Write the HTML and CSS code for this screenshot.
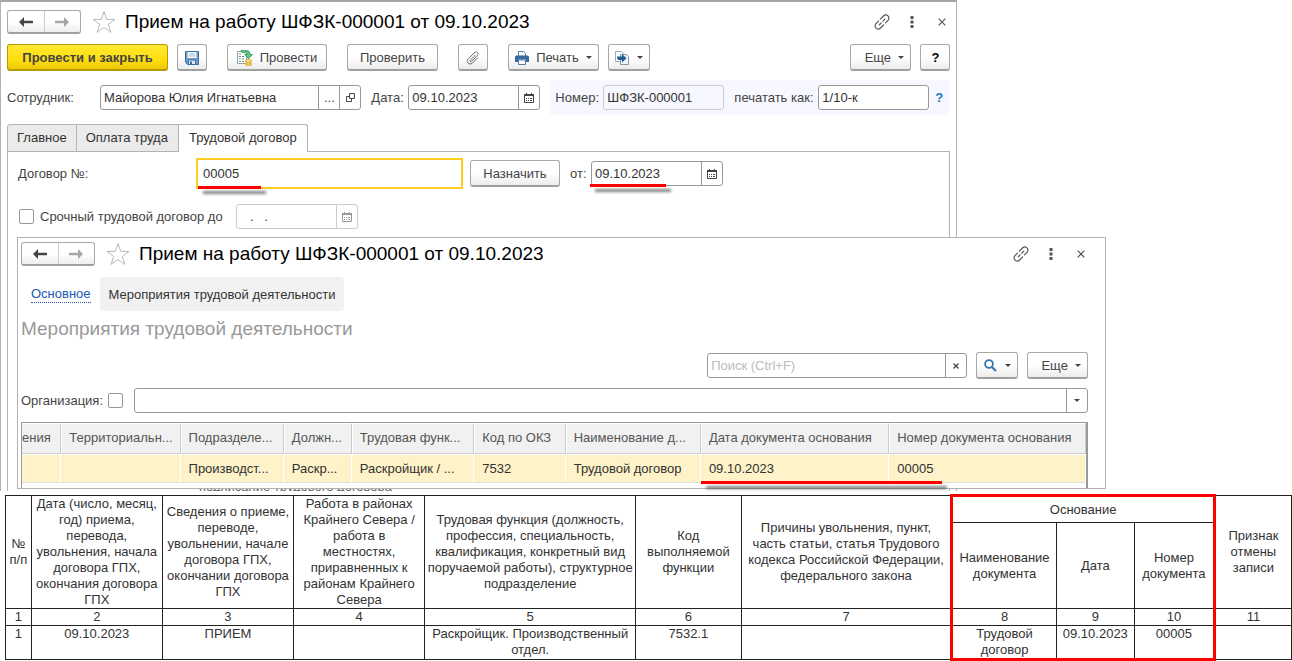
FILE: index.html
```html
<!DOCTYPE html>
<html lang="ru">
<head>
<meta charset="utf-8">
<title>Прием на работу</title>
<link rel="stylesheet" href="styles.css">
</head>
<body>
<svg class="defs" aria-hidden="true">
  <symbol id="i-left" viewBox="0 0 14 10"><path d="M5 0L0 5l5 5V6.300h9V3.700H5z" fill="currentColor"/></symbol>
  <symbol id="i-right" viewBox="0 0 14 10"><path d="M9 0l5 5-5 5V6.300H0V3.700h9z" fill="currentColor"/></symbol>
  <symbol id="i-star" viewBox="0 0 24 24"><path d="M12 1.500l2.700 7.900h8.300l-6.600 5 2.500 7.900-6.900-4.800-6.900 4.800 2.500-7.900-6.600-5h8.300z" fill="#fff" stroke="#b4b9bf"/></symbol>
  <symbol id="i-link" viewBox="0 0 16 16"><g fill="none" stroke="#555" stroke-width="1.200" stroke-linecap="round"><path d="M6.300 5.200l3.200-3.200c2.900-2.900 7.400 1.300 4.500 4.300l-2.500 2.500"/><path d="M9.700 10.800l-3.200 3.200c-2.900 2.900-7.400-1.300-4.500-4.300l2.500-2.500"/><path d="M5.200 10.800l2-2M8.800 7.200l2-2"/></g></symbol>
  <symbol id="i-dots" viewBox="0 0 4 12"><path d="M.5 0h3v3h-3zM.5 4.500h3v3h-3zM.5 9h3v3h-3z" fill="#555"/></symbol>
  <symbol id="i-close" viewBox="0 0 8 8"><path d="M.7.7l6.600 6.600M7.300.7L.7 7.300" stroke="#555" stroke-width="1.200"/></symbol>
  <symbol id="i-x" viewBox="0 0 6 6"><path d="M.5.5l5 5M5.500.5l-5 5" stroke="#444" stroke-width="1.200"/></symbol>
  <symbol id="i-caret" viewBox="0 0 6 3"><path d="M0 0h6L3 3z" fill="#444"/></symbol>
  <symbol id="i-save" viewBox="0 0 14 14"><path d="M.5.5h13v13h-11l-2-2z" fill="#6d9cc9" stroke="#3e6ea0"/><path d="M2.500 1h9v6h-9z" fill="#fff"/><path d="M3.500 3h7M3.500 5h7" stroke="#9fb6cc"/><path d="M3.500 9h7v4.500h-7z" fill="#dbe8f3" stroke="#3e6ea0"/><path d="M5 10.500h2v2.500H5z" fill="#3e6ea0"/></symbol>
  <symbol id="i-post" viewBox="0 0 16 16"><path d="M.5 1.500h9v12h-9z" fill="#fff" stroke="#8fa3ad"/><path d="M2 4h2M2 6.500h2M2 9h2M2 11.500h2M5 6.500h2M5 9h2M5 11.500h2" stroke="#6d8c9a"/><path d="M4 .6h5c3 0 4 1.400 4 3.900h2.400L11.500 8.800 7.700 4.500H10C10 3 9.500 2.600 8 2.600H5z" fill="#62c483" stroke="#2e9657" stroke-width=".8"/><ellipse cx="11.500" cy="14" rx="3.300" ry="1.500" fill="#f6cf5c" stroke="#d79e24" stroke-width=".8"/><ellipse cx="11.500" cy="11" rx="3.300" ry="1.500" fill="#fbdf84" stroke="#d79e24" stroke-width=".8"/></symbol>
  <symbol id="i-clip" viewBox="0 0 14 14"><path d="M9.500 4L4.300 9.200c-.9.900.3 2.100 1.200 1.200l5.900-5.900c2-2-1-4.800-3-2.800L2.300 7.800c-3 3 1.300 7.100 4.200 4.200L12 6.500" fill="none" stroke="#666"/></symbol>
  <symbol id="i-print" viewBox="0 0 14 14"><path d="M3.500 5V.5h5l2 2V5" fill="#fff" stroke="#54799f"/><path d="M1.500 4.500h11Q14 4.500 14 6v5h-3V8.500H3V11H0V6q0-1.500 1.500-1.500z" fill="#35699f"/><path d="M3.500 9h7v4.500h-7z" fill="#fff" stroke="#54799f"/></symbol>
  <symbol id="i-base" viewBox="0 0 14 14"><path d="M.5.5h6l2 2v8h-8z" fill="#fff" stroke="#9aa9b8"/><path d="M5.500 3.500h6l2 2v8h-8z" fill="#edf3f8" stroke="#8399ad"/><path d="M2 5.500h5V3l4.500 4.200L7 11.500V9H4Q2 9 2 5.500z" fill="#275b91"/></symbol>
  <symbol id="i-cal" viewBox="0 0 10 10"><path d="M.5 1.500h9v8h-9z" fill="#fff" stroke="currentColor"/><path d="M0 1h10v2H0zM2 0h1v2H2zM7 0h1v2H7z" fill="currentColor"/><path d="M2 5h1v1H2zM4 5h1v1H4zM6 5h2v1H6zM2 7h1v1H2zM4 7h1v1H4zM6 7h2v1H6z" fill="currentColor"/></symbol>
  <symbol id="i-open" viewBox="0 0 9 9"><path d="M3.500.5h5v5h-5z" fill="none" stroke="#444"/><path d="M3 3.500H.5v5h5V6" fill="none" stroke="#444"/></symbol>
  <symbol id="i-find" viewBox="0 0 13 13"><circle cx="5" cy="5" r="3.900" fill="#fff" stroke="#3476b0" stroke-width="1.800"/><path d="M8 8l4 4" stroke="#3476b0" stroke-width="2.200"/></symbol>
</svg>

<main class="page">
  <div class="stage">
    <section class="window window-back">
      <header class="titlebar">
        <div class="nav"><button type="button" aria-label="Назад"><svg class="arrow"><use href="#i-left"/></svg></button><button type="button" class="off" aria-label="Вперед"><svg class="arrow"><use href="#i-right"/></svg></button></div>
        <svg class="star"><use href="#i-star"/></svg>
        <h1 class="title">Прием на работу ШФЗК-000001 от 09.10.2023</h1>
        <div class="tools"><button type="button" class="tool" aria-label="Ссылка"><svg class="s16"><use href="#i-link"/></svg></button><button type="button" class="tool" aria-label="Меню"><svg class="dots"><use href="#i-dots"/></svg></button><button type="button" class="tool" aria-label="Закрыть"><svg class="s8"><use href="#i-close"/></svg></button></div>
      </header>
      <div class="commands">
        <button type="button" class="btn primary">Провести и закрыть</button>
        <button type="button" class="btn square" aria-label="Записать"><svg class="s14"><use href="#i-save"/></svg></button>
        <button type="button" class="btn apart wide"><svg class="s16"><use href="#i-post"/></svg>Провести</button>
        <button type="button" class="btn apart medium">Проверить</button>
        <button type="button" class="btn apart square" aria-label="Файлы"><svg class="s14"><use href="#i-clip"/></svg></button>
        <button type="button" class="btn apart medium"><svg class="s14"><use href="#i-print"/></svg>Печать<svg class="caret"><use href="#i-caret"/></svg></button>
        <button type="button" class="btn pair" aria-label="Создать на основании"><svg class="s14"><use href="#i-base"/></svg><svg class="caret"><use href="#i-caret"/></svg></button>
        <button type="button" class="btn more">Еще<svg class="caret"><use href="#i-caret"/></svg></button>
        <button type="button" class="btn square help">?</button>
      </div>
      <div class="fields">
        <label class="lead" for="emp">Сотрудник:</label>
        <div class="group grow"><input id="emp" value="Майорова Юлия Игнатьевна"><button type="button" aria-label="Выбрать">...</button><button type="button" aria-label="Открыть"><svg class="s9"><use href="#i-open"/></svg></button></div>
        <label class="mid" for="date">Дата:</label>
        <div class="group date"><input id="date" value="09.10.2023"><button type="button" aria-label="Календарь"><svg class="s10"><use href="#i-cal"/></svg></button></div>
        <div class="number">
          <label class="num-label" for="num">Номер:</label>
          <div class="group num readonly"><input id="num" value="ШФЗК-000001" readonly></div>
          <label class="print-label" for="pr">печатать как:</label>
          <div class="group pr"><input id="pr" value="1/10-к"></div>
          <a class="hint" href="#">?</a>
        </div>
      </div>
      <div class="tabs" role="tablist">
        <button type="button" role="tab" class="tab">Главное</button><button type="button" role="tab" class="tab">Оплата труда</button><button type="button" role="tab" class="tab current" aria-selected="true">Трудовой договор</button>
      </div>
      <div class="panel">
        <div class="contract">
          <label class="contract-label" for="ctr">Договор №:</label>
          <div class="focus marked mark-number"><input id="ctr" value="00005"></div>
          <button type="button" class="btn assign">Назначить</button>
          <label class="from" for="from">от:</label>
          <div class="group date marked mark-date"><input id="from" value="09.10.2023"><button type="button" aria-label="Календарь"><svg class="s10"><use href="#i-cal"/></svg></button></div>
        </div>
        <div class="term">
          <input type="checkbox" class="check" id="term"><label for="term">Срочный трудовой договор до</label>
          <div class="group till readonly"><input aria-label="Дата окончания" value="  .   ." disabled><button type="button" disabled aria-label="Календарь"><svg class="s10"><use href="#i-cal"/></svg></button></div>
        </div>
        <p class="under">подписание трудового договора</p>
      </div>
    </section>

    <section class="window window-front">
      <header class="titlebar">
        <div class="nav"><button type="button" aria-label="Назад"><svg class="arrow"><use href="#i-left"/></svg></button><button type="button" class="off" aria-label="Вперед"><svg class="arrow"><use href="#i-right"/></svg></button></div>
        <svg class="star"><use href="#i-star"/></svg>
        <h2 class="title">Прием на работу ШФЗК-000001 от 09.10.2023</h2>
        <div class="tools"><button type="button" class="tool" aria-label="Ссылка"><svg class="s16"><use href="#i-link"/></svg></button><button type="button" class="tool" aria-label="Меню"><svg class="dots"><use href="#i-dots"/></svg></button><button type="button" class="tool" aria-label="Закрыть"><svg class="s8"><use href="#i-close"/></svg></button></div>
      </header>
      <nav class="links"><a class="link" href="#">Основное</a><a class="here" href="#">Мероприятия трудовой деятельности</a></nav>
      <h3 class="subtitle">Мероприятия трудовой деятельности</h3>
      <div class="search">
        <div class="group find"><input aria-label="Поиск" placeholder="Поиск (Ctrl+F)"><button type="button" aria-label="Очистить"><svg class="s6"><use href="#i-x"/></svg></button></div>
        <button type="button" class="btn pair" aria-label="Найти"><svg class="s13"><use href="#i-find"/></svg><svg class="caret"><use href="#i-caret"/></svg></button>
        <button type="button" class="btn more">Еще<svg class="caret"><use href="#i-caret"/></svg></button>
      </div>
      <div class="org">
        <label for="org-on">Организация:</label><input type="checkbox" class="check" id="org-on">
        <div class="group grow"><input aria-label="Организация"><button type="button" aria-label="Список"><svg class="caret"><use href="#i-caret"/></svg></button></div>
      </div>
      <div class="listbox">
        <table class="list">
          <colgroup><col class="l1"><col class="l2"><col class="l3"><col class="l4"><col class="l5"><col class="l6"><col class="l7"><col class="l8"><col class="l9"></colgroup>
          <thead><tr><th class="cut">ения</th><th>Территориальн...</th><th>Подразделе...</th><th>Должн...</th><th>Трудовая функ...</th><th>Код по ОКЗ</th><th>Наименование д...</th><th>Дата документа основания</th><th>Номер документа основания</th></tr></thead>
          <tbody><tr><td></td><td></td><td>Производст...</td><td>Раскр...</td><td>Раскройщик / ...</td><td>7532</td><td>Трудовой договор</td><td class="marked mark-row">09.10.2023</td><td>00005</td></tr></tbody>
        </table>
      </div>
    </section>
  </div>

  <table class="form">
    <colgroup><col class="f1"><col class="f2"><col class="f3"><col class="f4"><col class="f5"><col class="f6"><col class="f7"><col class="f8"><col class="f9"><col class="f10"><col class="f11"></colgroup>
    <thead>
      <tr class="top"><th rowspan="2">№ п/п</th><th rowspan="2">Дата (число, месяц, год) приема, перевода, увольнения, начала договора ГПХ, окончания договора ГПХ</th><th rowspan="2">Сведения о приеме, переводе, увольнении, начале договора ГПХ, окончании договора ГПХ</th><th rowspan="2">Работа в районах Крайнего Севера / работа в местностях, приравненных к районам Крайнего Севера</th><th rowspan="2">Трудовая функция (должность, профессия, специальность, квалификация, конкретный вид поручаемой работы), структурное подразделение</th><th rowspan="2">Код выполняемой функции</th><th rowspan="2">Причины увольнения, пункт, часть статьи, статья Трудового кодекса Российской Федерации, федерального закона</th><th colspan="3" class="basis">Основание</th><th rowspan="2">Признак отмены записи</th></tr>
      <tr class="sub"><th>Наименование документа</th><th>Дата</th><th>Номер документа</th></tr>
      <tr class="nums"><th>1</th><th>2</th><th>3</th><th>4</th><th>5</th><th>6</th><th>7</th><th>8</th><th>9</th><th>10</th><th>11</th></tr>
    </thead>
    <tbody>
      <tr class="entry"><td>1</td><td>09.10.2023</td><td>ПРИЕМ</td><td></td><td>Раскройщик. Производственный отдел.</td><td>7532.1</td><td></td><td>Трудовой договор</td><td>09.10.2023</td><td>00005</td><td></td></tr>
    </tbody>
  </table>
</main>
</body>
</html>
```
FILE: styles.css
```css
* { box-sizing: border-box; }
body { margin: 0; background: #fff; color: #444; font: 13px/16px "Liberation Sans", Arial, sans-serif; }
h1, h2, h3, p { margin: 0; font-weight: normal; }
button, input { font: inherit; color: inherit; margin: 0; }
button { padding: 0; }
svg { display: block; flex: none; }
.defs { position: absolute; width: 0; height: 0; }

.s16 { width: 16px; height: 16px; }
.s14 { width: 14px; height: 14px; }
.s13 { width: 13px; height: 13px; }
.s10 { width: 10px; height: 10px; }
.s9 { width: 9px; height: 9px; }
.s8 { width: 8px; height: 8px; }
.s6 { width: 6px; height: 6px; }
.arrow { width: 14px; height: 10px; }
.star { width: 24px; height: 24px; }
.dots { width: 4px; height: 12px; }
.caret { width: 6px; height: 3px; }

/* Overlapping windows share one grid cell */
.stage { display: grid; }
.window { grid-area: 1 / 1; background: #fff; border: 1px solid #b2b2b2; }
.window-back { width: 74.1%; border-top: 2px solid #a6a6a6; border-bottom: 0; padding: 8px 6px 0; display: flex; flex-direction: column; overflow: hidden; }
.window-front { width: 84.3%; margin: 237px 0 2px 17px; padding: 4px 17px 0 3px; z-index: 1; }

.titlebar { display: flex; align-items: center; height: 24px; }
.nav { display: flex; width: 74px; height: 24px; border: 1px solid #a8a8a8; border-bottom: 2px solid #a0a0a0; border-radius: 3px; background: linear-gradient(#fff 50%, #eee); }
.nav button { flex: 1; display: flex; align-items: center; justify-content: center; border: 0; background: none; }
.nav .off { color: #a6a6a6; border-left: 1px solid #ccc; }
.star { margin: 0 9px 0 11px; }
.title { font-size: 19px; line-height: 24px; color: #000; white-space: nowrap; }
.tools { margin-left: auto; display: flex; }
.tool { display: flex; align-items: center; justify-content: center; width: 30px; height: 24px; border: 0; background: none; }
.window-back .tools { margin-right: -7px; }
.window-front .tools { margin-right: -8px; }

.btn { display: flex; align-items: center; justify-content: center; gap: 7px; height: 27px; padding-top: 1px; border: 1px solid #a8a8a8; border-bottom: 2px solid #a0a0a0; border-radius: 3px; background: linear-gradient(#fff 50%, #ececec); white-space: nowrap; }
.primary { width: 161px; font-weight: bold; border-color: #b59a00; background: linear-gradient(#ffe830, #ffdf10 60%, #ecc800); }
.square { width: 30px; }
.wide { width: 100px; }
.medium { width: 91px; }
.assign { width: 90px; }
.pair { width: 42px; gap: 8px; }
.more { width: 61px; padding-left: 7px; }
.help { color: #000; font-weight: bold; }

.commands { display: flex; gap: 9px; margin-top: 10px; }
.commands .apart { margin-left: 11px; }
.commands .more { margin-left: auto; }

.group { display: flex; height: 25px; border: 1px solid #999; border-radius: 3px; background: #fff; }
.group input { flex: 1; min-width: 0; width: 0; border: 0; padding: 0 3px; background: none; outline: 0; color: #333; }
.group input::placeholder { color: #bbb; opacity: 1; }
.group button { display: flex; align-items: center; justify-content: center; width: 21px; border: 0; border-left: 1px solid #999; background: none; }
.group.grow { flex: 1; }
.group.date { width: 132px; }
.group.readonly { border-color: #ccc; background: none; }
.group.readonly button { border-color: #ccc; color: #999; }

.fields { display: flex; align-items: center; height: 35px; margin-top: 9px; }
.lead { width: 93px; }
.mid { width: 47px; padding-left: 10px; }
.number { display: flex; align-items: center; height: 35px; width: 400px; margin-left: 10px; padding-left: 5px; background: #f7f8ff; }
.num-label { width: 48px; }
.num { width: 121px; }
.print-label { width: 94px; padding-left: 10px; white-space: nowrap; }
.pr { width: 111px; }
.hint { margin-left: 6px; color: #1a78c2; text-decoration: none; font-weight: bold; }

.tabs { display: flex; height: 28px; margin: 9px 0 -1px; position: relative; }
.tab { border: 1px solid #b2b2b2; border-left-width: 0; padding: 0 10px 0 9px; background: #ebebeb; color: #333; white-space: nowrap; }
.tab:first-child { border-left-width: 1px; border-top-left-radius: 3px; padding: 0 9px; }
.tab.current { padding: 0 10px; background: #fff; border-bottom-color: #fff; border-top-right-radius: 3px; }
.panel { flex: 1; border: 1px solid #b2b2b2; border-bottom: 0; padding: 6px 10px 0; }
.contract { display: flex; align-items: center; height: 31px; }
.contract-label { width: 178px; }
.focus { display: flex; width: 267px; height: 31px; margin-right: 7px; border: 2px solid #fc2; background: #fff; }
.focus input { flex: 1; min-width: 0; border: 0; outline: 0; padding: 0 5px; color: #333; }
.from { width: 31px; padding-left: 10px; }
.term { display: flex; align-items: center; height: 25px; margin-top: 15px; }
.check { appearance: none; flex: none; width: 15px; height: 15px; border: 1px solid #999; border-radius: 2px; background: #fff; }
.term .check { margin: 0 6px 0 1px; }
.till { width: 122px; margin-left: 13px; }
.till input { padding-left: 6px; white-space: pre; }
.under { margin: 250px 0 0 181px; line-height: 16px; color: #666; height: 0; }

/* Red underline marks with a soft drop shadow */
.marked { position: relative; }
.marked::after { content: ""; position: absolute; height: 3px; background: #f00; box-shadow: 5px 5px 3px rgba(0, 0, 0, .5); }
.mark-number::after { left: 0; bottom: -2px; width: 63px; }
.mark-date::after { left: -2px; bottom: -2px; width: 76px; }
.mark-row::after { left: 0; bottom: -2px; width: 241px; z-index: 1; }

.links { display: flex; align-items: center; margin: 11px 0 0 10px; }
.link { color: #2357b5; text-decoration: none; border-bottom: 1px dotted #2357b5; line-height: 16px; }
.here { margin-left: 9px; padding: 10px 9px 8px; border-radius: 4px; background: #f1f1f1; color: #333; text-decoration: none; }
.subtitle { margin-top: 6px; font-size: 19px; line-height: 24px; color: #999; }
.search { display: flex; justify-content: flex-end; align-items: center; margin-top: 11px; }
.find { width: 260px; }
.search .btn { margin-left: 9px; }
.org { display: flex; align-items: center; margin-top: 9px; }
.org .check { margin: 0 11px 0 5px; }

.listbox { margin-top: 9px; padding-bottom: 5px; border: 1px solid #999; border-right-width: 2px; border-bottom: 0; }
.list { width: 100%; table-layout: fixed; border-collapse: separate; border-spacing: 0; }
.list th, .list td { padding: 0 0 0 7px; text-align: left; font-weight: normal; white-space: nowrap; }
.list th { height: 31px; padding-bottom: 2px; background: #f1f1f1; border: 1px solid #fff; border-right-color: #ccc; border-bottom-color: #ccc; color: #555; }
.list td { height: 29px; background: #fdf2c8; background-clip: padding-box; border: 1px solid #fff; border-left-width: 0; border-bottom: 1px solid #ddd; color: #333; padding-left: 8px; }
.list .cut { padding: 0 0 2px; border-left: 0; }
.l1 { width: 3.700%; } .l2 { width: 11.200%; } .l3 { width: 9.700%; } .l4 { width: 6.400%; } .l5 { width: 11.500%; }
.l6 { width: 8.600%; } .l7 { width: 12.700%; } .l8 { width: 17.700%; } .l9 { width: 18.500%; }

.form { width: calc(100% - 5px); margin: 3px 0 0 5px; table-layout: fixed; border-collapse: collapse; color: #333; }
.form th, .form td { border: 1px solid #222; padding: 0 1px; font-weight: normal; text-align: center; vertical-align: middle; }
.form .entry td { vertical-align: top; }
.form .top .basis { height: 27px; border-top: 3px solid #f00; border-left: 3px solid #f00; border-right: 3px solid #f00; }
.form .sub th { height: 86px; }
.form .nums th { height: 17px; }
.form .entry td { height: 33px; }
.form .sub th:first-child, .form .nums th:nth-child(8), .form .entry td:nth-child(8) { border-left: 3px solid #f00; }
.form .sub th:last-child, .form .nums th:nth-child(10), .form .entry td:nth-child(10) { border-right: 3px solid #f00; }
.form .entry td:nth-child(n+8):nth-child(-n+10) { border-bottom: 3px solid #f00; }
.f1 { width: 2%; } .f2 { width: 10.200%; } .f3 { width: 10.200%; } .f4 { width: 10.200%; } .f5 { width: 16.400%; } .f6 { width: 8.200%; }
.f7 { width: 16.400%; } .f8 { width: 8.100%; } .f9 { width: 6.100%; } .f10 { width: 6.200%; } .f11 { width: 6%; }
```
